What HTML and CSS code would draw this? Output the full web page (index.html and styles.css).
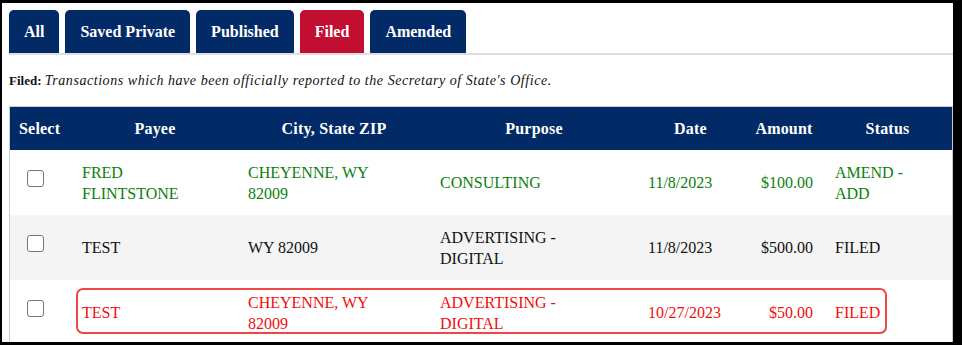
FILE: index.html
```html
<!DOCTYPE html>
<html>
<head>
<meta charset="utf-8">
<link rel="stylesheet" href="styles.css">
</head>
<body>
<div class="frame">
  <nav class="tabs">
    <a class="tab">All</a>
    <a class="tab">Saved Private</a>
    <a class="tab">Published</a>
    <a class="tab active">Filed</a>
    <a class="tab">Amended</a>
  </nav>
  <p class="desc"><b>Filed:</b> <i>Transactions which have been officially reported to the Secretary of State's Office.</i></p>
  <div class="table-wrap">
    <table class="grid">
      <colgroup>
        <col class="c-select"><col class="c-payee"><col class="c-city"><col class="c-purpose"><col class="c-date"><col class="c-amount"><col class="c-status">
      </colgroup>
      <thead>
        <tr><th>Select</th><th>Payee</th><th>City, State ZIP</th><th>Purpose</th><th>Date</th><th>Amount</th><th>Status</th></tr>
      </thead>
      <tbody>
        <tr class="r-amend">
          <td><input type="checkbox" class="chk"></td>
          <td>FRED FLINTSTONE</td>
          <td>CHEYENNE, WY 82009</td>
          <td>CONSULTING</td>
          <td>11/8/2023</td>
          <td class="amt">$100.00</td>
          <td>AMEND - ADD</td>
        </tr>
        <tr class="r-alt">
          <td><input type="checkbox" class="chk"></td>
          <td>TEST</td>
          <td>WY 82009</td>
          <td>ADVERTISING - DIGITAL</td>
          <td>11/8/2023</td>
          <td class="amt">$500.00</td>
          <td>FILED</td>
        </tr>
        <tr class="r-flag">
          <td><input type="checkbox" class="chk"></td>
          <td>TEST</td>
          <td>CHEYENNE, WY 82009</td>
          <td>ADVERTISING - DIGITAL</td>
          <td>10/27/2023</td>
          <td class="amt">$50.00</td>
          <td>FILED</td>
        </tr>
      </tbody>
    </table>
    <div class="highlight"></div>
  </div>
</div>
</body>
</html>
```

FILE: styles.css
```css
html { background: #000; }
body {
  margin: 0;
  height: 345px;
  overflow: hidden;
  font-family: "Liberation Serif", "Times New Roman", serif;
}
.frame {
  margin: 3px 9px 0 2px;
  height: 339px;
  background: #fff;
  overflow: hidden;
  padding: 7px 0 0 7px;
  box-sizing: border-box;
}
.tabs {
  display: flex;
  gap: 6px;
  border-bottom: 2px solid #dfdfe3;
}
.tab {
  height: 43px;
  display: flex;
  align-items: center;
  padding: 0 15px;
  background: #022a66;
  color: #fff;
  font-weight: bold;
  font-size: 16px;
  border-radius: 5px 5px 0 0;
}
.tab.active { background: #c10e31; }
.desc {
  margin: 16px 0 15px 0;
  font-size: 13px;
  line-height: 20px;
  color: #111;
}
.desc i {
  font-size: 14px;
  letter-spacing: 0.55px;
}
.table-wrap { position: relative; }
.grid {
  width: 944px;
  table-layout: fixed;
  border-collapse: separate;
  border-spacing: 0;
  border: 1px solid #c9ccd4;
  border-bottom: none;
}
.c-select { width: 64px; }
.c-payee { width: 166px; }
.c-city { width: 192px; }
.c-purpose { width: 208px; }
.c-date { width: 105px; }
.c-amount { width: 82px; }
.c-status { width: 125px; }
.grid th {
  background: #022a66;
  color: #fff;
  font-size: 16px;
  font-weight: bold;
  letter-spacing: 0.2px;
  height: 43px;
  padding: 0 12px 0 8px;
  text-align: center;
}
.grid th:first-child { padding: 0 4px 0 9px; text-align: left; }
.grid td {
  height: 65px;
  box-sizing: border-box;
  padding: 0 30px 0 8px;
  font-size: 16px;
  line-height: 21px;
  vertical-align: middle;
}
.grid td.amt { text-align: right; padding-right: 14px; }
.r-amend td { color: #0b800b; }
.r-alt td { background: #f4f4f4; color: #111; }
.r-flag td { color: #f20d0d; }
.chk {
  appearance: none;
  -webkit-appearance: none;
  display: block;
  width: 17px;
  height: 17px;
  margin: -8px 0 0 9px;
  border: 1px solid #767676;
  border-radius: 3px;
  background: #fff;
  box-sizing: border-box;
}
.highlight {
  position: absolute;
  left: 67px;
  top: 182px;
  width: 811px;
  height: 46px;
  box-sizing: border-box;
  border: 2px solid #ef4545;
  border-radius: 7px;
  pointer-events: none;
}
```
